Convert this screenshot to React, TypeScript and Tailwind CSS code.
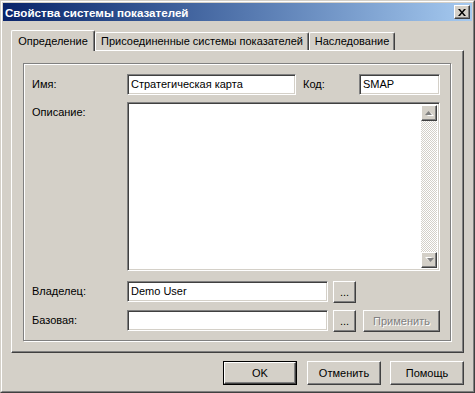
const raised =
  "border border-t-white border-l-white border-r-[#404040] border-b-[#404040] shadow-[inset_-1px_-1px_0_#808080] bg-[#d4d0c8]";
const sunken =
  "border border-t-[#808080] border-l-[#808080] border-b-white border-r-white shadow-[inset_1px_1px_0_#404040,inset_-1px_-1px_0_#d4d0c8] bg-white";

const TextField = ({ value, width }: { value?: string; width: string }) => (
  <div className={`${sunken} ${width} h-[21px] flex items-center pl-[3px] text-black whitespace-nowrap overflow-hidden`}>
    {value}
  </div>
);

const Btn = ({ label, width, disabled }: { label: string; width: string; disabled?: boolean }) => (
  <div
    className={`${raised} ${width} h-[22px] flex items-center justify-center ${
      disabled ? "text-[#808080] [text-shadow:1px_1px_0_#fff]" : "text-black"
    }`}
  >
    {label}
  </div>
);

const Arrow = ({ down }: { down?: boolean }) => (
  <div className={`${raised} w-[16px] h-[16px] flex items-center justify-center`}>
    <svg width="9" height="6" viewBox="0 0 9 6" className={down ? "rotate-180" : ""}>
      <path d="M1 5 L4.5 1.5 L8 5 Z" fill="#fff" transform="translate(1,1)" />
      <path d="M0 5 L3.5 1 L7 5 Z" fill="#808080" />
    </svg>
  </div>
);

const Tab = ({ label, width, active }: { label: string; width: string; active?: boolean }) => (
  <div
    className={`${width} ${
      active ? "h-[21px] -mb-px z-10" : "h-[18px]"
    } relative bg-[#d4d0c8] border-l border-t border-l-white border-t-white border-r border-r-[#404040] shadow-[inset_-1px_0_0_#808080] rounded-tl-[2px] rounded-tr-[2px] flex items-center justify-center text-black whitespace-nowrap`}
  >
    {label}
  </div>
);

export default function App() {
  return (
    <div className="w-[475px] h-[393px] bg-[#d4d0c8] border border-t-[#d4d0c8] border-l-[#d4d0c8] border-r-[#404040] border-b-[#404040] font-['Liberation_Sans',Arial,sans-serif] text-[11px] leading-[13px] select-none">
      <div className="h-full border border-t-white border-l-white border-r-[#808080] border-b-[#808080] p-px flex flex-col">
        <div className="h-[18px] flex items-center justify-between bg-gradient-to-r from-[#0a246a] to-[#a6caf0] pl-[2px] pr-[2px]">
          <span className="text-white font-bold text-[11.6px]">Свойства системы показателей</span>
          <div className={`${raised} w-[16px] h-[14px] flex items-center justify-center`}>
            <svg width="8" height="7" viewBox="0 0 8 7">
              <path d="M0 0 L2 0 L4 2.5 L6 0 L8 0 L5 3.5 L8 7 L6 7 L4 4.5 L2 7 L0 7 L3 3.5 Z" fill="#000" />
            </svg>
          </div>
        </div>

        <div className="px-[8px] pt-[9px]">
          <div className="flex items-end h-[20px]">
            <Tab label="Определение" width="w-[84px]" active />
            <Tab label="Присоединенные системы показателей" width="w-[214px]" />
            <Tab label="Наследование" width="w-[86px]" />
          </div>

          <div className="h-[303px] border border-t-white border-l-white border-r-[#404040] border-b-[#404040] shadow-[inset_-1px_-1px_0_#808080] pl-[11px] pt-[12px]">
            <div className="w-[428px] h-[278px] border border-[#808080] shadow-[1px_1px_0_#fff,inset_1px_1px_0_#fff] pl-[8px] pt-[10px] text-black">
              <div className="flex items-center h-[21px]">
                <span className="w-[95px]">Имя:</span>
                <TextField value="Стратегическая карта" width="w-[169px]" />
                <span className="w-[63px] pl-[7px]">Код:</span>
                <TextField value="SMAP" width="w-[81px]" />
              </div>

              <div className="flex mt-[7px] h-[169px]">
                <span className="w-[95px] pt-[4px]">Описание:</span>
                <div className={`${sunken} w-[313px] h-[169px] flex justify-end p-[2px]`}>
                  <div className="w-[16px] h-full flex flex-col">
                    <Arrow />
                    <div className="flex-1 bg-[repeating-conic-gradient(#ffffff_0_25%,#d4d0c8_0_50%)] bg-[length:2px_2px]" />
                    <Arrow down />
                  </div>
                </div>
              </div>

              <div className="flex items-start mt-[10px] h-[22px]">
                <span className="w-[95px] h-[21px] flex items-center">Владелец:</span>
                <TextField value="Demo User" width="w-[201px]" />
                <div className="ml-[5px]">
                  <Btn label="..." width="w-[23px]" />
                </div>
              </div>

              <div className="flex items-start mt-[7px] h-[22px]">
                <span className="w-[95px] h-[21px] flex items-center">Базовая:</span>
                <TextField width="w-[201px]" />
                <div className="ml-[5px]">
                  <Btn label="..." width="w-[23px]" />
                </div>
                <div className="ml-[7px]">
                  <Btn label="Применить" width="w-[77px]" disabled />
                </div>
              </div>
            </div>
          </div>

          <div className="flex justify-end mt-[8px] text-black">
            <div className="border border-black">
              <div className={`${raised} w-[72px] h-[22px] flex items-center justify-center`}>OK</div>
            </div>
            <div className="ml-[10px]">
              <div className={`${raised} w-[74px] h-[24px] flex items-center justify-center`}>Отменить</div>
            </div>
            <div className="ml-[9px]">
              <div className={`${raised} w-[74px] h-[24px] flex items-center justify-center`}>Помощь</div>
            </div>
          </div>
        </div>
      </div>
    </div>
  );
}
